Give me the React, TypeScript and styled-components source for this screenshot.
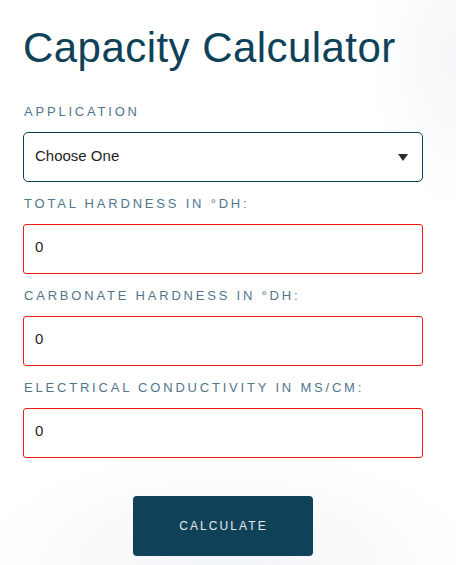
import React from "react";
import styled, { createGlobalStyle } from "styled-components";

const Global = createGlobalStyle`
  html, body {
    margin: 0;
    padding: 0;
    background: #ffffff;
  }
  body {
    font-family: "Liberation Sans", Arial, Helvetica, sans-serif;
    -webkit-font-smoothing: antialiased;
  }
  * { box-sizing: border-box; }
`;

const Page = styled.div`
  width: 456px;
  min-height: 565px;
  background:
    radial-gradient(ellipse 260px 120px at 50% 100%, rgba(225, 232, 238, 0.45), rgba(255, 255, 255, 0) 100%),
    radial-gradient(ellipse 90px 160px at 100% 10%, rgba(225, 232, 238, 0.35), rgba(255, 255, 255, 0) 100%),
    #ffffff;
`;

const Form = styled.form`
  display: flex;
  flex-direction: column;
  padding: 24px 33px 0 23px;
`;

const Title = styled.h1`
  margin: 0 0 32px 0;
  font-size: 42px;
  line-height: 48px;
  font-weight: 400;
  color: #0f4259;
  letter-spacing: 0.45px;
`;

const Field = styled.div`
  display: flex;
  flex-direction: column;
  gap: 12px;
  margin-bottom: 14px;
`;

const Label = styled.label`
  font-size: 13px;
  line-height: 16px;
  letter-spacing: 2.8px;
  text-transform: uppercase;
  color: #52758c;
  padding-left: 1px;
`;

const SelectWrap = styled.div`
  position: relative;
  width: 400px;
  height: 50px;
`;

const Select = styled.select`
  appearance: none;
  -webkit-appearance: none;
  width: 100%;
  height: 100%;
  border: 1px solid #0f3f55;
  border-radius: 5px;
  background: #ffffff;
  padding: 0 11px 3px 11px;
  font-family: "Liberation Sans", Arial, Helvetica, sans-serif;
  font-size: 15px;
  color: #1f1f1f;
  outline: none;
`;

const Arrow = styled.svg`
  position: absolute;
  right: 15px;
  top: 22px;
  width: 10px;
  height: 7px;
  pointer-events: none;
`;

const Input = styled.input<{ $invalid?: boolean }>`
  width: 400px;
  height: 50px;
  border: 1px solid ${(p) => (p.$invalid ? "#ee1c12" : "#0f3f55")};
  border-radius: 3px;
  background: #ffffff;
  padding: 0 11px 5px 11px;
  font-family: "Liberation Sans", Arial, Helvetica, sans-serif;
  font-size: 15px;
  color: #1f1f1f;
  outline: none;
`;

const Actions = styled.div`
  display: flex;
  justify-content: center;
  padding-top: 24px;
`;

const Button = styled.button`
  width: 180px;
  height: 60px;
  border: none;
  border-radius: 4px;
  background: #0f4259;
  color: #e4ebef;
  font-family: "Liberation Sans", Arial, Helvetica, sans-serif;
  font-size: 12px;
  letter-spacing: 2.1px;
  text-transform: uppercase;
  cursor: pointer;
  padding: 0 0 0 1px;
`;

const fields = [
  "Total Hardness in °dH:",
  "Carbonate Hardness in °dH:",
  "Electrical Conductivity in mS/cm:",
];

export default function App() {
  return (
    <Page>
      <Global />
      <Form onSubmit={(e) => e.preventDefault()}>
        <Title>Capacity Calculator</Title>
        <Field>
          <Label>Application</Label>
          <SelectWrap>
            <Select defaultValue="">
              <option value="">Choose One</option>
            </Select>
            <Arrow viewBox="0 0 10 7">
              <path d="M0 0 H10 L5 7 Z" fill="#2a2a2a" />
            </Arrow>
          </SelectWrap>
        </Field>
        {fields.map((f) => (
          <Field key={f}>
            <Label>{f}</Label>
            <Input $invalid defaultValue="0" />
          </Field>
        ))}
        <Actions>
          <Button type="submit">Calculate</Button>
        </Actions>
      </Form>
    </Page>
  );
}
